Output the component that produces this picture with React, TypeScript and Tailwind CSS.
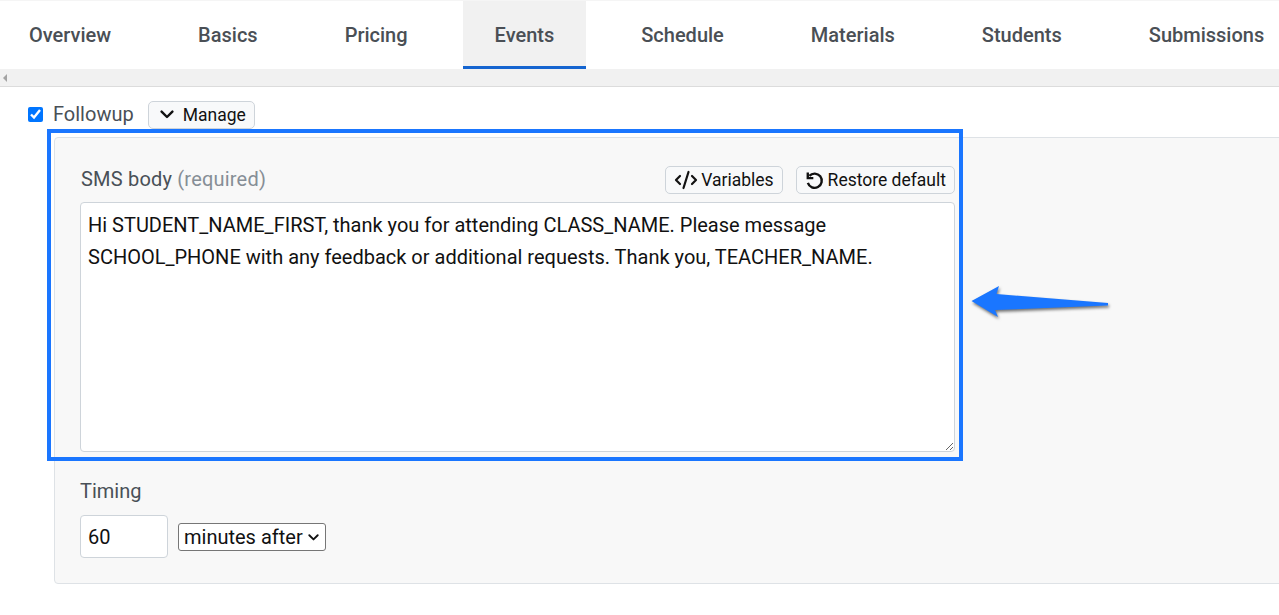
import React from "react";
import { CodeXml } from "lucide-react";

const tabs = ["Overview", "Basics", "Pricing", "Events", "Schedule", "Materials", "Students", "Submissions"];

function Btn({ children, className = "" }: { children: React.ReactNode; className?: string }) {
  return (
    <button className={"flex items-center rounded-[5px] border border-[#ced4da] bg-[#f8f9fa] text-[#111] text-[17.5px] h-[28px] whitespace-nowrap " + className}>
      {children}
    </button>
  );
}

function Chevron({ className = "" }: { className?: string }) {
  return (
    <svg width="14" height="9" viewBox="0 0 14 9" fill="none" stroke="currentColor" strokeWidth="2.4" strokeLinecap="round" strokeLinejoin="round" className={className}>
      <path d="M1.6 1.6 7 7l5.4-5.4" />
    </svg>
  );
}

export default function App() {
  return (
    <div className="relative h-[615px] w-[1279px] overflow-hidden bg-white font-['Roboto',sans-serif] text-[20px] text-[#212529]">
      <div className="overflow-hidden">
        <div className="flex h-[69px] gap-[23px] -ml-[3px] border-t border-t-[#f5f5f5]">
          {tabs.map((t) => (
            <div
              key={t}
              className={
                "flex items-center px-[32px] whitespace-nowrap text-[20px] font-medium text-[#4a4f55] border-b-[3px] pt-[3px] " +
                (t === "Events" ? "bg-[#f1f1f1] border-[#1565d0]" : "border-transparent")
              }
            >
              {t}
            </div>
          ))}
        </div>
      </div>
      <div className="flex h-[18px] items-center bg-[#f1f1f1] border-b border-[#dcdcdc] pl-[3px]">
        <div className="h-0 w-0 border-y-[4px] border-y-transparent border-r-[4px] border-r-[#a3a3a3]" />
      </div>

      <div className="flex items-center h-[28px] mt-[14px] pl-[28px]">
        <input type="checkbox" defaultChecked className="m-0 h-[15px] w-[15px] -mt-[2px] accent-[#0075ff]" />
        <span className="ml-[10px] pb-[2px] text-[#495057]">Followup</span>
        <Btn className="ml-[14px] pl-[11px] w-[107px]">
          <Chevron className="mr-[9px] -mt-[2px]" />
          Manage
        </Btn>
      </div>

      <div className="ml-[54px] mt-[8px] h-[447px] w-[1240px] rounded-l-[4px] border border-[#dee2e6] bg-[#f8f8f8] pl-[25px] pt-[27px]">
        <div className="flex w-[875px] items-center justify-between h-[30px]">
          <div className="text-[#495057] pb-[3px] tracking-[0.2px] pl-[1px]">
            SMS body <span className="text-[#868e96]">(required)</span>
          </div>
          <div className="flex gap-[13px]">
            <Btn className="pl-[8px] pr-[8px]">
              <CodeXml size={24} strokeWidth={2.2} className="mr-[3px]" />
              Variables
            </Btn>
            <Btn className="pl-[8px] pr-[8px]">
              <svg width="19" height="19" viewBox="0 0 24 24" fill="none" stroke="currentColor" strokeWidth="3" strokeLinecap="butt" strokeLinejoin="miter" className="mr-[4px]">
                <path d="M5.5 6.2A9 9 0 1 1 3.6 15" />
                <path d="M3.5 2v7h7" />
              </svg>
              Restore default
            </Btn>
          </div>
        </div>
        <textarea
          readOnly
          className="mt-[7px] block h-[250px] w-[875px] rounded-[4px] border border-[#ced4da] bg-white px-[7px] py-[6px] text-[20px] leading-[32px] text-[#111] outline-none"
          value="Hi STUDENT_NAME_FIRST, thank you for attending CLASS_NAME. Please message SCHOOL_PHONE with any feedback or additional requests. Thank you, TEACHER_NAME."
        />
        <div className="mt-[27px] text-[#495057] leading-[24px]">Timing</div>
        <div className="mt-[12px] flex items-center">
          <input
            readOnly
            value="60"
            className="h-[43px] w-[88px] rounded-[4px] border border-[#ced4da] bg-white px-[7px] text-[20px] text-[#111] outline-none"
          />
          <div className="relative ml-[10px]">
            <select className="block h-[28px] w-[148px] appearance-none rounded-[3px] border border-[#767676] bg-white text-[20px] leading-[24px] text-[#111] pl-[5px]" defaultValue="a">
              <option value="a">minutes after</option>
            </select>
            <Chevron className="pointer-events-none absolute right-[7px] top-[11px] h-[7px] w-[11px] text-[#111]" />
          </div>
        </div>
      </div>

      <div className="pointer-events-none absolute left-[47px] top-[129px] h-[332px] w-[916px] border-[4px] border-[#1a76ff]" />
      <svg className="absolute left-[965px] top-[280px] drop-shadow-[1px_2px_1.5px_rgba(0,0,0,0.55)]" width="150" height="44" viewBox="965 280 150 44">
        <polygon points="971.5,301 999,286 996.5,294 1108,303 1108,305.5 995,310 998,317" fill="#1a76ff" />
      </svg>
    </div>
  );
}
